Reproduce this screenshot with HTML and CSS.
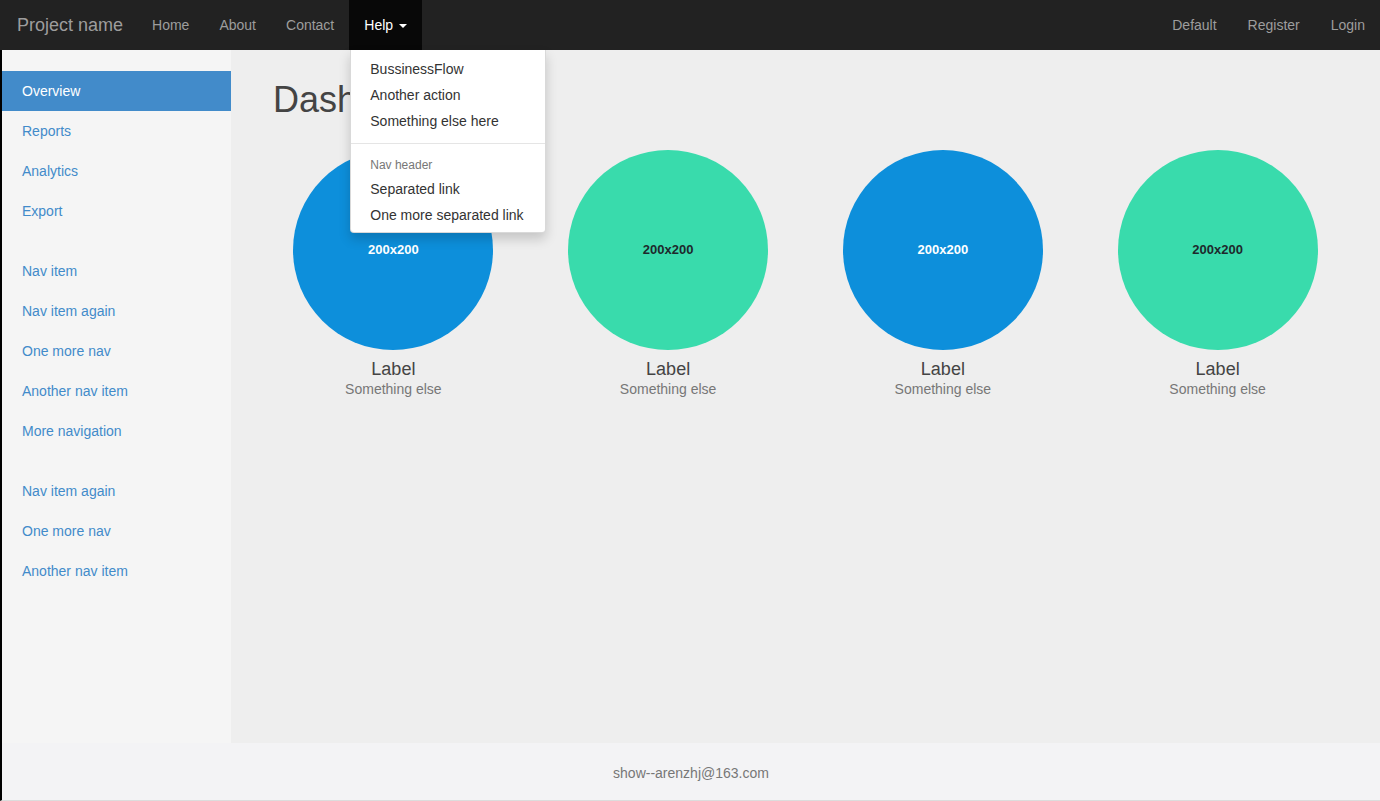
FILE: index.html
```html
<!DOCTYPE html>
<html lang="en">
<head>
<meta charset="utf-8">
<title>Dashboard</title>
<link rel="stylesheet" href="styles.css">
</head>
<body>
<nav class="navbar">
  <a class="brand" href="#">Project name</a>
  <ul class="nav">
    <li><a href="#">Home</a></li>
    <li><a href="#">About</a></li>
    <li><a href="#">Contact</a></li>
    <li class="dropdown">
      <a href="#" class="active">Help <span class="caret"></span></a>
      <ul class="dropdown-menu">
        <li><a href="#">BussinessFlow</a></li>
        <li><a href="#">Another action</a></li>
        <li><a href="#">Something else here</a></li>
        <li class="divider"></li>
        <li class="dropdown-header">Nav header</li>
        <li><a href="#">Separated link</a></li>
        <li><a href="#">One more separated link</a></li>
      </ul>
    </li>
  </ul>
  <ul class="nav nav-right">
    <li><a href="#">Default</a></li>
    <li><a href="#">Register</a></li>
    <li><a href="#">Login</a></li>
  </ul>
</nav>
<div class="page">
  <div class="layout">
    <aside class="sidebar">
      <ul class="side-nav">
        <li><a href="#" class="current">Overview</a></li>
        <li><a href="#">Reports</a></li>
        <li><a href="#">Analytics</a></li>
        <li><a href="#">Export</a></li>
      </ul>
      <ul class="side-nav">
        <li><a href="#">Nav item</a></li>
        <li><a href="#">Nav item again</a></li>
        <li><a href="#">One more nav</a></li>
        <li><a href="#">Another nav item</a></li>
        <li><a href="#">More navigation</a></li>
      </ul>
      <ul class="side-nav">
        <li><a href="#">Nav item again</a></li>
        <li><a href="#">One more nav</a></li>
        <li><a href="#">Another nav item</a></li>
      </ul>
    </aside>
    <main class="main">
      <h1 class="page-header">Dashboard</h1>
      <div class="placeholders">
        <div class="placeholder">
          <div class="circle sky">200x200</div>
          <h4>Label</h4>
          <span class="muted">Something else</span>
        </div>
        <div class="placeholder">
          <div class="circle vine">200x200</div>
          <h4>Label</h4>
          <span class="muted">Something else</span>
        </div>
        <div class="placeholder">
          <div class="circle sky">200x200</div>
          <h4>Label</h4>
          <span class="muted">Something else</span>
        </div>
        <div class="placeholder">
          <div class="circle vine">200x200</div>
          <h4>Label</h4>
          <span class="muted">Something else</span>
        </div>
      </div>
    </main>
  </div>
  <footer class="footer">show--arenzhj@163.com</footer>
</div>
</body>
</html>
```

FILE: styles.css
```css
* { box-sizing: border-box; }
html, body { height: 100%; }
body {
  margin: 0;
  font-family: "Liberation Sans", Arial, sans-serif;
  font-size: 14px;
  line-height: 20px;
  color: #333;
  display: flex;
  flex-direction: column;
  background: #f3f3f5;
}
a { text-decoration: none; }
ul { list-style: none; margin: 0; padding: 0; }

.navbar {
  height: 50px;
  flex: 0 0 50px;
  background: #222;
  display: flex;
  align-items: stretch;
  position: relative;
  z-index: 10;
}
.brand {
  color: #9d9d9d;
  font-size: 18px;
  line-height: 20px;
  padding: 15px 14px 15px 17px;
}
.nav { display: flex; }
.nav > li { position: relative; }
.nav > li > a {
  display: block;
  padding: 15px;
  line-height: 20px;
  color: #9d9d9d;
}
.nav > li > a.active {
  background: #080808;
  color: #fff;
}
.nav-right { margin-left: auto; }
.nav-right > li > a { padding: 15px 15px 15px 16px; }
.caret {
  display: inline-block;
  width: 0;
  height: 0;
  margin-left: 2px;
  vertical-align: middle;
  border-top: 4px solid;
  border-left: 4px solid transparent;
  border-right: 4px solid transparent;
}

.dropdown-menu {
  position: absolute;
  top: 100%;
  left: 1px;
  min-width: 160px;
  padding: 6px 0 4px;
  background: #fff;
  border: 1px solid rgba(0,0,0,.15);
  border-top: 0;
  border-radius: 0 0 4px 4px;
  box-shadow: 0 6px 12px rgba(0,0,0,.175);
  white-space: nowrap;
}
.dropdown-menu a {
  display: block;
  padding: 3px 21px 3px 19px;
  line-height: 20px;
  color: #333;
}
.dropdown-menu .divider {
  height: 1px;
  margin: 9px 0 8px;
  background: #e5e5e5;
}
.dropdown-header {
  padding: 4px 21px 2px 19px;
  font-size: 12px;
  line-height: 18px;
  color: #777;
}

.page {
  flex: 1;
  display: flex;
  flex-direction: column;
  border-left: 2px solid #000;
  border-bottom: 1px solid #dcdcdc;
  min-height: 0;
}
.layout {
  flex: 1;
  display: flex;
  min-height: 0;
}
.sidebar {
  width: 229px;
  flex: 0 0 229px;
  background: #f5f5f5;
  padding-top: 21px;
}
.side-nav { margin-bottom: 20px; }
.side-nav a {
  display: block;
  padding: 10px 20px;
  line-height: 20px;
  color: #428bca;
}
.side-nav a.current {
  background: #428bca;
  color: #fff;
}

.main {
  flex: 1;
  background: #eee;
  padding: 30px 40px;
}
.page-header {
  margin: 0 0 20px;
  padding: 0 0 9px 2px;
  border-bottom: 1px solid #eee;
  font-size: 36px;
  font-weight: 500;
  line-height: 1.1;
  color: #444;
}
.placeholders {
  display: grid;
  grid-template-columns: repeat(4, 1fr);
  margin: 0 -15px;
}
.placeholder {
  padding: 0 15px;
  text-align: center;
}
.circle {
  width: 200px;
  height: 200px;
  margin: 0 auto;
  border-radius: 50%;
  display: flex;
  align-items: center;
  justify-content: center;
  font-size: 13px;
  font-weight: bold;
}
.sky { background: #0d8fdb; color: #fff; }
.vine { background: #39dbac; color: #1e292c; }
.placeholder h4 {
  margin: 10px 0 0;
  font-size: 18px;
  font-weight: 500;
  line-height: 1.1;
  color: #444;
}
.muted { color: #777; }

.footer {
  flex: 0 0 57px;
  height: 57px;
  padding-top: 20px;
  line-height: 20px;
  text-align: center;
  color: #777;
  background: #f3f3f5;
}
```
